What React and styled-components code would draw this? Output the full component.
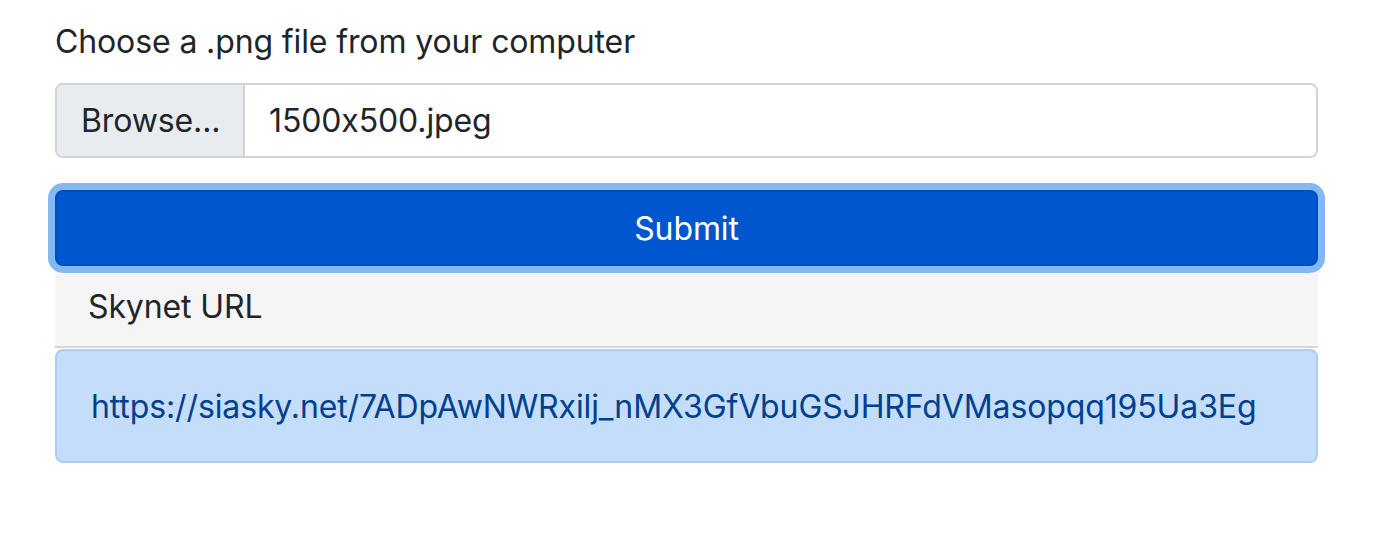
import React from "react";
import styled, { createGlobalStyle } from "styled-components";

const Global = createGlobalStyle`
  html, body { margin: 0; padding: 0; background: #ffffff; }
  body {
    font-family: Inter, "Noto Sans", "Liberation Sans", sans-serif;
    font-feature-settings: "calt" 0;
    letter-spacing: -0.12px;
    color: #212529;
  }
  * { box-sizing: border-box; }
`;

const Page = styled.div`
  width: 1263px;
  margin-left: 55px;
  padding-top: 19px;
  display: flex;
  flex-direction: column;
`;

const Label = styled.div`
  font-size: 32px;
  line-height: 46px;
  margin-bottom: 18px;
  color: #212529;
`;

const FileGroup = styled.div`
  display: flex;
  height: 75px;
  border: 2px solid #ced4da;
  border-radius: 8px;
  overflow: hidden;
  font-size: 32px;
`;

const BrowseBox = styled.div`
  width: 188px;
  flex: none;
  display: flex;
  align-items: center;
  padding-left: 24px;
  background: #e9ecef;
  border-right: 2px solid #ced4da;
  color: #212529;
`;

const FileName = styled.div`
  flex: 1;
  display: flex;
  align-items: center;
  padding-left: 24px;
  background: #ffffff;
  color: #212529;
`;

const SubmitButton = styled.button`
  position: relative;
  z-index: 1;
  margin-top: 32px;
  height: 76px;
  width: 100%;
  border: 2px solid #004cc0;
  border-radius: 8px;
  background: #0056cf;
  color: #ffffff;
  font-family: inherit;
  font-feature-settings: "calt" 0;
  letter-spacing: -0.12px;
  font-size: 32px;
  box-shadow: 0 0 0 7px #84b8f5;
  cursor: pointer;
`;

const ResultHeader = styled.div`
  height: 82px;
  display: flex;
  align-items: center;
  padding-left: 33px;
  background: #f5f5f5;
  border-bottom: 2px solid #d6d6d6;
  font-size: 32px;
  color: #212529;
`;

const UrlAlert = styled.div`
  margin-top: 1px;
  height: 114px;
  display: flex;
  align-items: center;
  padding-left: 34px;
  background: #c4ddfa;
  border: 2px solid #a9cdf6;
  border-radius: 8px;
  font-size: 32px;
  color: #003e8e;
`;

export default function App() {
  return (
    <>
      <Global />
      <Page>
        <Label>Choose a .png file from your computer</Label>
        <FileGroup>
          <BrowseBox>Browse...</BrowseBox>
          <FileName>1500x500.jpeg</FileName>
        </FileGroup>
        <SubmitButton>Submit</SubmitButton>
        <ResultHeader>Skynet URL</ResultHeader>
        <UrlAlert>https://siasky.net/7ADpAwNWRxilj_nMX3GfVbuGSJHRFdVMasopqq195Ua3Eg</UrlAlert>
      </Page>
    </>
  );
}
